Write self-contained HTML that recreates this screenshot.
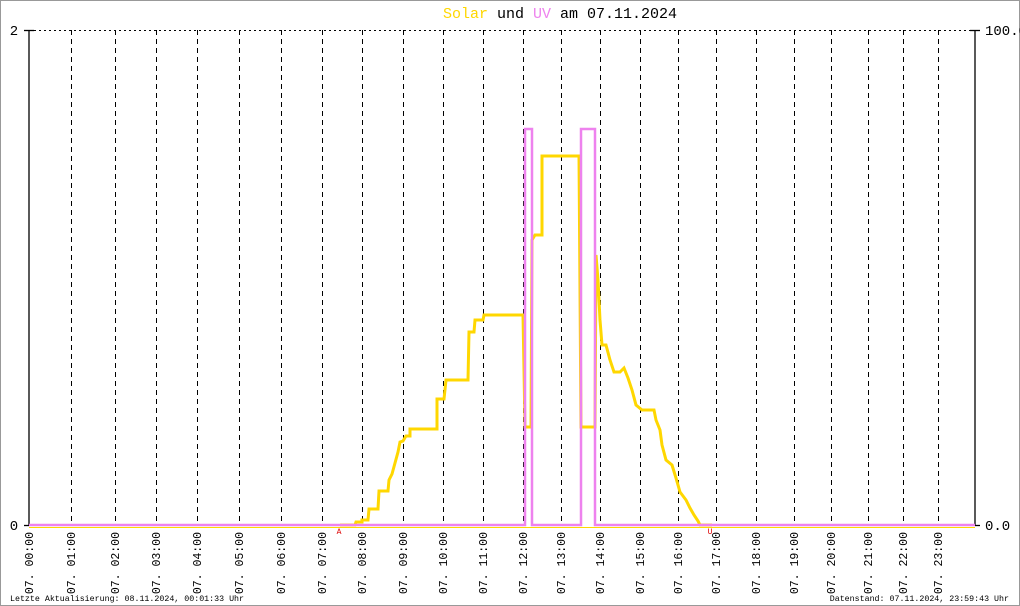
<!DOCTYPE html>
<html><head><meta charset="utf-8"><style>
html,body{margin:0;padding:0;background:#fff;}
svg{display:block;}
text{font-family:"Liberation Mono","DejaVu Sans Mono",monospace;}
</style></head><body>
<svg width="1020" height="606" viewBox="0 0 1020 606" xmlns="http://www.w3.org/2000/svg">
<rect x="0.5" y="0.5" width="1019" height="605" fill="#fff" stroke="#999" stroke-width="1"/>
<text x="560" y="18" text-anchor="middle" font-size="15"><tspan fill="#ffd700">Solar</tspan><tspan fill="#000"> und </tspan><tspan fill="#ee82ee">UV</tspan><tspan fill="#000"> am 07.11.2024</tspan></text>
<g stroke="#000" stroke-width="1" stroke-dasharray="2,3">
<line x1="29" y1="30.5" x2="975" y2="30.5"/>
</g>
<g stroke="#000" stroke-width="1" stroke-dasharray="5,4">
<line x1="71.5" y1="30" x2="71.5" y2="525"/><line x1="115.5" y1="30" x2="115.5" y2="525"/><line x1="156.5" y1="30" x2="156.5" y2="525"/><line x1="197.5" y1="30" x2="197.5" y2="525"/><line x1="239.5" y1="30" x2="239.5" y2="525"/><line x1="281.5" y1="30" x2="281.5" y2="525"/><line x1="322.5" y1="30" x2="322.5" y2="525"/><line x1="362.5" y1="30" x2="362.5" y2="525"/><line x1="403.5" y1="30" x2="403.5" y2="525"/><line x1="443.5" y1="30" x2="443.5" y2="525"/><line x1="483.5" y1="30" x2="483.5" y2="525"/><line x1="523.5" y1="30" x2="523.5" y2="525"/><line x1="561.5" y1="30" x2="561.5" y2="525"/><line x1="600.5" y1="30" x2="600.5" y2="525"/><line x1="640.5" y1="30" x2="640.5" y2="525"/><line x1="678.5" y1="30" x2="678.5" y2="525"/><line x1="716.5" y1="30" x2="716.5" y2="525"/><line x1="756.5" y1="30" x2="756.5" y2="525"/><line x1="794.5" y1="30" x2="794.5" y2="525"/><line x1="831.5" y1="30" x2="831.5" y2="525"/><line x1="868.5" y1="30" x2="868.5" y2="525"/><line x1="903.5" y1="30" x2="903.5" y2="525"/><line x1="938.5" y1="30" x2="938.5" y2="525"/>
</g>
<g stroke="#000" stroke-width="1.3">
<line x1="29" y1="30" x2="29" y2="526"/><line x1="975" y1="30" x2="975" y2="526"/>
<line x1="24" y1="30.5" x2="34" y2="30.5"/><line x1="970" y1="30.5" x2="980" y2="30.5"/>
<line x1="24" y1="525.5" x2="29" y2="525.5"/><line x1="975" y1="525.5" x2="980" y2="525.5"/>
</g>
<text x="14" y="35" font-size="14" text-anchor="middle">2</text>
<text x="14" y="530" font-size="14" text-anchor="middle">0</text>
<text x="985" y="35" font-size="14">100.0</text>
<text x="985" y="530" font-size="14">0.0</text>
<line x1="29" y1="527.5" x2="975" y2="527.5" stroke="#ffd700" stroke-width="1"/>
<path fill="none" stroke="#ffd700" stroke-width="3" stroke-linejoin="miter" d="M340,525 L355,525 L356,522 L362,522 L362,520 L368,520 L369,509 L378,509 L379,491 L388,491 L389,480 L392,474 L395,463 L398,452 L400,442 L403,441 L406,436 L410,436 L410,429 L437,429 L437,399 L444,399 L446,380 L468,380 L469,332 L474,332 L475,320 L483,320 L484,315 L523,315 L524,370 L525,427 L531,427 L532,240 L535,235 L542,235 L542,156 L579,156 L580,292 L581,427 L595,427 L596,255 L598,280 L600,320 L602,345 L606,345 L610,360 L614,372 L620,372 L624,368 L628,378 L632,390 L636,405 L642,410 L654,410 L656,420 L660,430 L662,445 L666,460 L672,465 L676,478 L680,492 L686,500 L690,508 L694,515 L698,521 L700,525 L712,525"/>
<path fill="none" stroke="#ee82ee" stroke-width="2.5" d="M29,525 L525,525 L525,129 L532,129 L532,525 L581,525 L581,129 L595,129 L595,525 L975,525"/>
<text x="339" y="534" font-size="8" fill="#d00" text-anchor="middle">A</text>
<text x="710" y="534" font-size="8" fill="#d00" text-anchor="middle">U</text>
<g font-size="11.5" text-anchor="end">
<text transform="translate(33,532) rotate(-90)">07. 00:00</text>
<text transform="translate(75,532) rotate(-90)">07. 01:00</text>
<text transform="translate(119,532) rotate(-90)">07. 02:00</text>
<text transform="translate(160,532) rotate(-90)">07. 03:00</text>
<text transform="translate(201,532) rotate(-90)">07. 04:00</text>
<text transform="translate(243,532) rotate(-90)">07. 05:00</text>
<text transform="translate(285,532) rotate(-90)">07. 06:00</text>
<text transform="translate(326,532) rotate(-90)">07. 07:00</text>
<text transform="translate(366,532) rotate(-90)">07. 08:00</text>
<text transform="translate(407,532) rotate(-90)">07. 09:00</text>
<text transform="translate(447,532) rotate(-90)">07. 10:00</text>
<text transform="translate(487,532) rotate(-90)">07. 11:00</text>
<text transform="translate(527,532) rotate(-90)">07. 12:00</text>
<text transform="translate(565,532) rotate(-90)">07. 13:00</text>
<text transform="translate(604,532) rotate(-90)">07. 14:00</text>
<text transform="translate(644,532) rotate(-90)">07. 15:00</text>
<text transform="translate(682,532) rotate(-90)">07. 16:00</text>
<text transform="translate(720,532) rotate(-90)">07. 17:00</text>
<text transform="translate(760,532) rotate(-90)">07. 18:00</text>
<text transform="translate(798,532) rotate(-90)">07. 19:00</text>
<text transform="translate(835,532) rotate(-90)">07. 20:00</text>
<text transform="translate(872,532) rotate(-90)">07. 21:00</text>
<text transform="translate(907,532) rotate(-90)">07. 22:00</text>
<text transform="translate(942,532) rotate(-90)">07. 23:00</text>
</g>
<text x="10" y="601" font-size="8.3">Letzte Aktualisierung: 08.11.2024, 00:01:33 Uhr</text>
<text x="1009" y="601" font-size="8.3" text-anchor="end">Datenstand: 07.11.2024, 23:59:43 Uhr</text>
</svg>
</body></html>
